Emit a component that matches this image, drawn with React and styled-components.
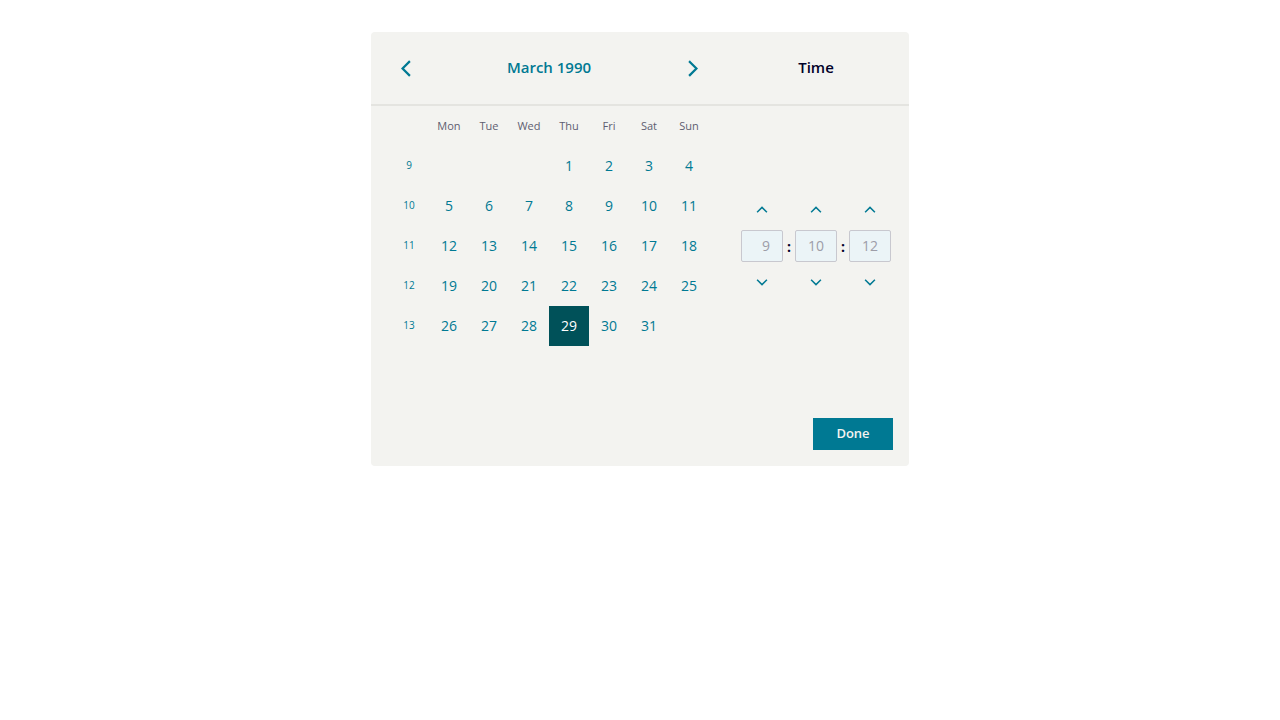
import React, { useState } from "react"
import styled, { createGlobalStyle } from "styled-components"

const GlobalStyle = createGlobalStyle`
  body {
    margin: 0;
    padding-top: 32px;
    background: #ffffff;
    font-family: "Open Sans", "Noto Sans", sans-serif;
  }
`

const Card = styled.div`
  width: 538px;
  margin: 0 auto;
  background: #f3f3f0;
  border-radius: 4px;
  display: flex;
  flex-direction: column;
`

const Header = styled.div`
  height: 72px;
  display: flex;
  border-bottom: 2px solid #e4e4e0;
`

const Nav = styled.div`
  width: 352px;
  box-sizing: border-box;
  padding: 0 15px 0 19px;
  display: flex;
  align-items: center;
  justify-content: space-between;
`

const IconButton = styled.button`
  width: ${({ w }) => w || 32}px;
  height: ${({ h }) => h || 32}px;
  padding: 0;
  border: none;
  background: transparent;
  color: #007993;
  display: flex;
  align-items: center;
  justify-content: center;
  cursor: pointer;
`

const MonthLabel = styled.span`
  color: #007993;
  font-size: 15px;
  font-weight: 600;
  padding-bottom: 2px;
`

const TimeTitle = styled.div`
  flex: 1;
  display: flex;
  align-items: center;
  justify-content: center;
  color: #000028;
  font-size: 15px;
  font-weight: 600;
  padding-bottom: 2px;
`

const Body = styled.div`
  display: flex;
  padding-bottom: 56px;
`

const CalendarGrid = styled.div`
  width: 352px;
  box-sizing: border-box;
  padding-left: 18px;
  display: grid;
  grid-template-columns: repeat(8, 40px);
  grid-auto-rows: 40px;
`

const Cell = styled.div`
  display: flex;
  align-items: center;
  justify-content: center;
  padding-bottom: 2px;
  box-sizing: border-box;
`

const WeekDay = styled(Cell)`
  font-size: 11px;
  color: #5e5e70;
`

const WeekNum = styled(Cell)`
  font-size: 10px;
  color: #007993;
`

const Day = styled(Cell)`
  font-size: 14px;
  cursor: pointer;
  color: ${({ selected }) => (selected ? "#ffffff" : "#007993")};
  background: ${({ selected }) => (selected ? "#005159" : "transparent")};
`

const TimeColumn = styled.div`
  flex: 1;
  display: flex;
  flex-direction: column;
  padding-top: 40px;
`

const TimeRow = styled.div`
  height: 200px;
  display: flex;
  align-items: center;
  justify-content: center;
`

const Spinner = styled.div`
  display: flex;
  flex-direction: column;
  align-items: center;
  gap: 8px;
`

const TimeInput = styled.input`
  width: 42px;
  height: 32px;
  box-sizing: border-box;
  border: 1px solid #c8c8cf;
  border-radius: 2px;
  background: #ebf4f7;
  padding: 0 12px 2px 0;
  text-align: right;
  font-family: inherit;
  font-size: 14px;
  color: #9d9da8;
  outline: none;
`

const Colon = styled.span`
  width: 12px;
  text-align: center;
  font-size: 14px;
  font-weight: 700;
  color: #000028;
`

const Footer = styled.div`
  display: flex;
  justify-content: flex-end;
  padding: 16px;
`

const DoneButton = styled.button`
  width: 80px;
  height: 32px;
  border: none;
  border-radius: 0;
  padding: 0 0 2px;
  background: #007993;
  color: #f3f3f0;
  font-family: inherit;
  font-size: 13px;
  font-weight: 600;
  cursor: pointer;
`

const Chevron = ({ dir, size = 16 }) => {
  const points = {
    left: "10,3 5,8 10,13",
    right: "6,3 11,8 6,13",
    up: "3,10 8,5 13,10",
    down: "3,6 8,11 13,6",
  }[dir]
  return (
    <svg width={size} height={size} viewBox="0 0 16 16" fill="none">
      <polyline points={points} stroke="currentColor" strokeWidth="1.7" strokeLinecap="square" />
    </svg>
  )
}

const weekDays = ["Mon", "Tue", "Wed", "Thu", "Fri", "Sat", "Sun"]
const weeks = [
  [9, [null, null, null, 1, 2, 3, 4]],
  [10, [5, 6, 7, 8, 9, 10, 11]],
  [11, [12, 13, 14, 15, 16, 17, 18]],
  [12, [19, 20, 21, 22, 23, 24, 25]],
  [13, [26, 27, 28, 29, 30, 31, null]],
]

export default function App() {
  const [selected, setSelected] = useState(29)
  const [time, setTime] = useState(["9", "10", "12"])

  const step = (i, d) => {
    const max = i === 0 ? 24 : 60
    const next = [...time]
    next[i] = String((Number(next[i]) + d + max) % max)
    setTime(next)
  }

  return (
    <>
      <GlobalStyle />
      <Card>
        <Header>
          <Nav>
            <IconButton>
              <Chevron dir="left" size={21} />
            </IconButton>
            <MonthLabel>March 1990</MonthLabel>
            <IconButton>
              <Chevron dir="right" size={21} />
            </IconButton>
          </Nav>
          <TimeTitle>Time</TimeTitle>
        </Header>
        <Body>
          <CalendarGrid>
            <Cell />
            {weekDays.map((d) => (
              <WeekDay key={d}>{d}</WeekDay>
            ))}
            {weeks.map(([wk, days]) => (
              <React.Fragment key={wk}>
                <WeekNum>{wk}</WeekNum>
                {days.map((d, i) =>
                  d ? (
                    <Day key={i} selected={d === selected} onClick={() => setSelected(d)}>
                      {d}
                    </Day>
                  ) : (
                    <Cell key={i} />
                  )
                )}
              </React.Fragment>
            ))}
          </CalendarGrid>
          <TimeColumn>
            <TimeRow>
              {time.map((t, i) => (
                <React.Fragment key={i}>
                  {i > 0 && <Colon>:</Colon>}
                  <Spinner>
                    <IconButton h={24} onClick={() => step(i, 1)}>
                      <Chevron dir="up" size={14} />
                    </IconButton>
                    <TimeInput value={t} readOnly />
                    <IconButton h={24} onClick={() => step(i, -1)}>
                      <Chevron dir="down" size={14} />
                    </IconButton>
                  </Spinner>
                </React.Fragment>
              ))}
            </TimeRow>
          </TimeColumn>
        </Body>
        <Footer>
          <DoneButton>Done</DoneButton>
        </Footer>
      </Card>
    </>
  )
}
